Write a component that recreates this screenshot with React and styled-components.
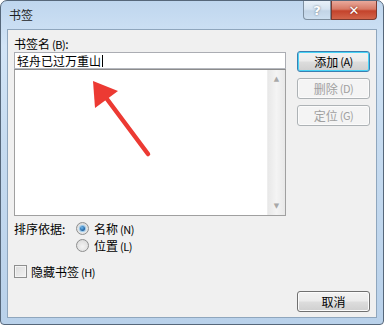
import React from "react";
import styled, { createGlobalStyle } from "styled-components";

const GlobalStyle = createGlobalStyle`
  html, body {
    margin: 0;
    padding: 0;
    background: #ffffff;
  }
  body {
    font-family: "Noto Sans CJK SC", "Liberation Sans", sans-serif;
    font-size: 12px;
    color: #000;
  }
`;

const Window = styled.div`
  position: relative;
  width: 384px;
  height: 325px;
  box-sizing: border-box;
  display: flex;
  flex-direction: column;
  border: 1px solid #56677a;
  border-radius: 7px 7px 4px 4px;
  background: linear-gradient(180deg, #bfd6ee 0%, #d2e4f6 14%, #c6dbf0 45%, #b9d1ea 100%);
  overflow: hidden;
`;

const TitleBar = styled.div`
  height: 28px;
  display: flex;
  align-items: flex-start;
  padding-left: 8px;
  padding-right: 6px;
`;

const Title = styled.div`
  line-height: 28px;
  font-size: 12px;
  color: #1e1e1e;
`;

const Controls = styled.div`
  margin-left: auto;
  display: flex;
`;

const CaptionButton = styled.div`
  width: ${p => p.$w}px;
  height: 19px;
  box-sizing: border-box;
  display: flex;
  align-items: center;
  justify-content: center;
  border: 1px solid ${p => (p.$close ? "#7a3a30" : "#7e8f9f")};
  border-top: none;
  border-radius: ${p => (p.$close ? "0 0 4px 0" : "0 0 0 4px")};
  background: ${p =>
    p.$close
      ? "linear-gradient(180deg, #e9a99b 0%, #d77a66 45%, #c4432c 55%, #d2644a 100%)"
      : "linear-gradient(180deg, #e8f0f8 0%, #d6e3f0 45%, #c2d4e6 55%, #cddff0 100%)"};
  color: #fff;
  font-family: "DejaVu Sans", sans-serif;
  font-weight: bold;
  font-size: 13px;
  text-shadow: 0 0 2px ${p => (p.$close ? "#6b1a10" : "#5a6a7a")};
`;

const Client = styled.div`
  flex: 1;
  margin: 0 6px 6px 6px;
  border: 1px solid #8fa6bd;
  background: #f0f0f0;
  padding: 7px 6px 0 6px;
  display: flex;
  flex-direction: column;
`;

const Top = styled.div`
  display: grid;
  grid-template-columns: 272px 73px;
  column-gap: 11px;
`;

const LeftColumn = styled.div`
  display: flex;
  flex-direction: column;
`;

const FieldLabel = styled.div`
  height: 14px;
  line-height: 14px;
  margin-bottom: 1px;
`;

const NameInput = styled.div`
  height: 17px;
  box-sizing: border-box;
  border: 1px solid #abadb3;
  border-bottom-color: #b5b8bf;
  background: #fff;
  padding-left: 2px;
  line-height: 15px;
  display: flex;
  align-items: center;
`;

const Caret = styled.span`
  display: inline-block;
  width: 1px;
  height: 12px;
  background: #000;
  margin-left: 1px;
`;

const ListBox = styled.div`
  height: 147px;
  box-sizing: border-box;
  border: 1px solid #a0a0a0;
  border-top-color: #8c8c8c;
  background: #fff;
  display: flex;
  justify-content: flex-end;
`;

const ScrollBar = styled.div`
  width: 17px;
  background: linear-gradient(90deg, #e8e8e8 0%, #f4f4f4 50%, #e8e8e8 100%);
  border-left: 1px solid #eeeeee;
  display: flex;
  flex-direction: column;
  justify-content: space-between;
  align-items: center;
  padding: 5px 0 5px;
  color: #a8a8a8;
  font-size: 7px;
  font-family: "DejaVu Sans", sans-serif;
`;

const RightColumn = styled.div`
  display: flex;
  flex-direction: column;
  gap: 6px;
  padding-top: 14px;
`;

const Button = styled.div`
  width: 73px;
  height: 21px;
  box-sizing: border-box;
  border: 1px solid ${p => (p.$focus ? "#3c7fb1" : p.$disabled ? "#adb2b5" : "#707070")};
  border-radius: 3px;
  box-shadow: ${p => (p.$focus ? "inset 0 0 0 1px #48d3f6" : "inset 0 0 0 1px #fbfbfb")};
  background: ${p =>
    p.$disabled
      ? "#f4f4f4"
      : "linear-gradient(180deg, #f2f2f2 0%, #ebebeb 48%, #dddddd 52%, #cfcfcf 100%)"};
  color: ${p => (p.$disabled ? "#a0a0a0" : "#000")};
  display: flex;
  align-items: center;
  justify-content: center;
  line-height: 1;
`;

const Mnemonic = styled.span`
  font-size: 11px;
  letter-spacing: -0.5px;
  margin-left: 2px;
`;

const SortRow = styled.div`
  display: flex;
  margin-top: 4px;
`;

const SortLabel = styled.div`
  width: 62px;
  height: 17px;
  line-height: 17px;
`;

const RadioGroup = styled.div`
  display: flex;
  flex-direction: column;
`;

const OptionRow = styled.div`
  height: 17px;
  display: flex;
  align-items: center;
  gap: 5px;
`;

const Radio = styled.span`
  width: 13px;
  height: 13px;
  box-sizing: border-box;
  border-radius: 50%;
  border: 1px solid #8e8f8f;
  background: radial-gradient(circle at 50% 60%, #f4f4f4 0%, #e2e2e2 60%, #cfcfcf 100%);
  display: flex;
  align-items: center;
  justify-content: center;
  &::after {
    content: "";
    display: ${p => (p.$checked ? "block" : "none")};
    width: 5px;
    height: 5px;
    border-radius: 50%;
    background: radial-gradient(circle at 40% 35%, #6fb9ee 0%, #1b5b9b 70%, #154a80 100%);
    box-shadow: 0 0 1px 1px #8cc3ea;
  }
`;

const CheckRow = styled(OptionRow)`
  margin-top: 9px;
  gap: 4px;
`;

const CheckBox = styled.span`
  width: 13px;
  height: 13px;
  box-sizing: border-box;
  border: 1px solid #8e8f8f;
  background: linear-gradient(135deg, #dcdcdc 0%, #f2f2f2 100%);
  box-shadow: inset 0 0 0 1px #f4f4f4;
`;

const Bottom = styled.div`
  display: flex;
  justify-content: flex-end;
  margin-top: 11px;
`;

const Overlay = styled.svg`
  position: absolute;
  left: 0;
  top: 0;
  pointer-events: none;
`;

export default function App() {
  return (
    <>
      <GlobalStyle />
      <Window>
        <TitleBar>
          <Title>书签</Title>
          <Controls>
            <CaptionButton $w={28}>?</CaptionButton>
            <CaptionButton $w={46} $close>✕</CaptionButton>
          </Controls>
        </TitleBar>
        <Client>
          <Top>
            <LeftColumn>
              <FieldLabel>
                书签名<Mnemonic>(B)</Mnemonic>:
              </FieldLabel>
              <NameInput>
                轻舟已过万重山
                <Caret />
              </NameInput>
              <ListBox>
                <ScrollBar>
                  <span>▲</span>
                  <span>▼</span>
                </ScrollBar>
              </ListBox>
            </LeftColumn>
            <RightColumn>
              <Button $focus>
                添加<Mnemonic>(A)</Mnemonic>
              </Button>
              <Button $disabled>
                删除<Mnemonic>(D)</Mnemonic>
              </Button>
              <Button $disabled>
                定位<Mnemonic>(G)</Mnemonic>
              </Button>
            </RightColumn>
          </Top>
          <SortRow>
            <SortLabel>排序依据:</SortLabel>
            <RadioGroup>
              <OptionRow>
                <Radio $checked />
                <span>
                  名称<Mnemonic>(N)</Mnemonic>
                </span>
              </OptionRow>
              <OptionRow>
                <Radio />
                <span>
                  位置<Mnemonic>(L)</Mnemonic>
                </span>
              </OptionRow>
            </RadioGroup>
          </SortRow>
          <CheckRow>
            <CheckBox />
            <span>
              隐藏书签<Mnemonic>(H)</Mnemonic>
            </span>
          </CheckRow>
          <Bottom>
            <Button>取消</Button>
          </Bottom>
        </Client>
        <Overlay width="384" height="325" viewBox="0 0 384 325">
          <line x1="147" y1="153" x2="100" y2="90" stroke="#ec3a33" strokeWidth="4.5" strokeLinecap="round" />
          <polygon points="92,80 117,90 94,107" fill="#ec3a33" />
        </Overlay>
      </Window>
    </>
  );
}
